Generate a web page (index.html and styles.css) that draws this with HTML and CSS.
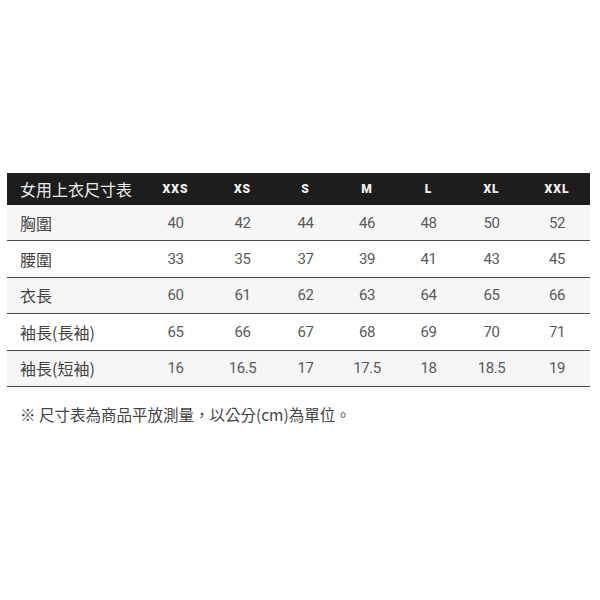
FILE: index.html
```html
<!DOCTYPE html>
<html lang="zh-Hant">
<head>
<meta charset="utf-8">
<title>女用上衣尺寸表</title>
<link rel="stylesheet" href="styles.css">
</head>
<body>
<div class="page">
  <div class="size-table">
    <div class="row head">
      <div class="cell label">女用上衣尺寸表</div>
      <div class="cell size">XXS</div>
      <div class="cell size">XS</div>
      <div class="cell size">S</div>
      <div class="cell size">M</div>
      <div class="cell size">L</div>
      <div class="cell size">XL</div>
      <div class="cell size">XXL</div>
    </div>
    <div class="row shade">
      <div class="cell label">胸圍</div>
      <div class="cell num">40</div><div class="cell num">42</div><div class="cell num">44</div><div class="cell num">46</div><div class="cell num">48</div><div class="cell num">50</div><div class="cell num">52</div>
    </div>
    <div class="row">
      <div class="cell label">腰圍</div>
      <div class="cell num">33</div><div class="cell num">35</div><div class="cell num">37</div><div class="cell num">39</div><div class="cell num">41</div><div class="cell num">43</div><div class="cell num">45</div>
    </div>
    <div class="row shade">
      <div class="cell label">衣長</div>
      <div class="cell num">60</div><div class="cell num">61</div><div class="cell num">62</div><div class="cell num">63</div><div class="cell num">64</div><div class="cell num">65</div><div class="cell num">66</div>
    </div>
    <div class="row">
      <div class="cell label">袖長(長袖)</div>
      <div class="cell num">65</div><div class="cell num">66</div><div class="cell num">67</div><div class="cell num">68</div><div class="cell num">69</div><div class="cell num">70</div><div class="cell num">71</div>
    </div>
    <div class="row shade">
      <div class="cell label">袖長(短袖)</div>
      <div class="cell num">16</div><div class="cell num">16.5</div><div class="cell num">17</div><div class="cell num">17.5</div><div class="cell num">18</div><div class="cell num">18.5</div><div class="cell num">19</div>
    </div>
  </div>
  <p class="note">※ 尺寸表為商品平放測量，以公分(cm)為單位。</p>
</div>
</body>
</html>
```

FILE: styles.css
```css
html, body {
  margin: 0;
  padding: 0;
  background: #ffffff;
}

.page {
  padding: 173px 10px 0 7px;
  font-family: "Noto Sans CJK TC", "Noto Sans", sans-serif;
}

.size-table {
  width: 583px;
}

.row {
  display: grid;
  grid-template-columns: 134px 69px 65px 61px 62px 61px 65px 66px;
  align-items: center;
  height: 35.4px;
  border-bottom: 1px solid #4a4a4a;
  background: #ffffff;
}

.row.shade {
  background: #f6f6f6;
}

.row.head {
  height: 32px;
  border-bottom: none;
  background: #1d1d1d;
}

.cell {
  text-align: center;
  white-space: nowrap;
}

.label {
  text-align: left;
  padding-left: 13px;
  font-size: 16px;
  color: #444444;
  line-height: 1;
}

.head .label {
  color: #ececec;
}

.size {
  font-family: "Roboto", sans-serif;
  font-weight: 900;
  font-size: 12px;
  letter-spacing: 1px;
  color: #f2f2f2;
}

.num {
  font-family: "Roboto", sans-serif;
  font-size: 15px;
  letter-spacing: -0.4px;
  color: #5a5a5a;
}

.note {
  margin: 17px 0 0 13px;
  font-size: 15.5px;
  color: #444444;
  line-height: 1.3;
}
```
